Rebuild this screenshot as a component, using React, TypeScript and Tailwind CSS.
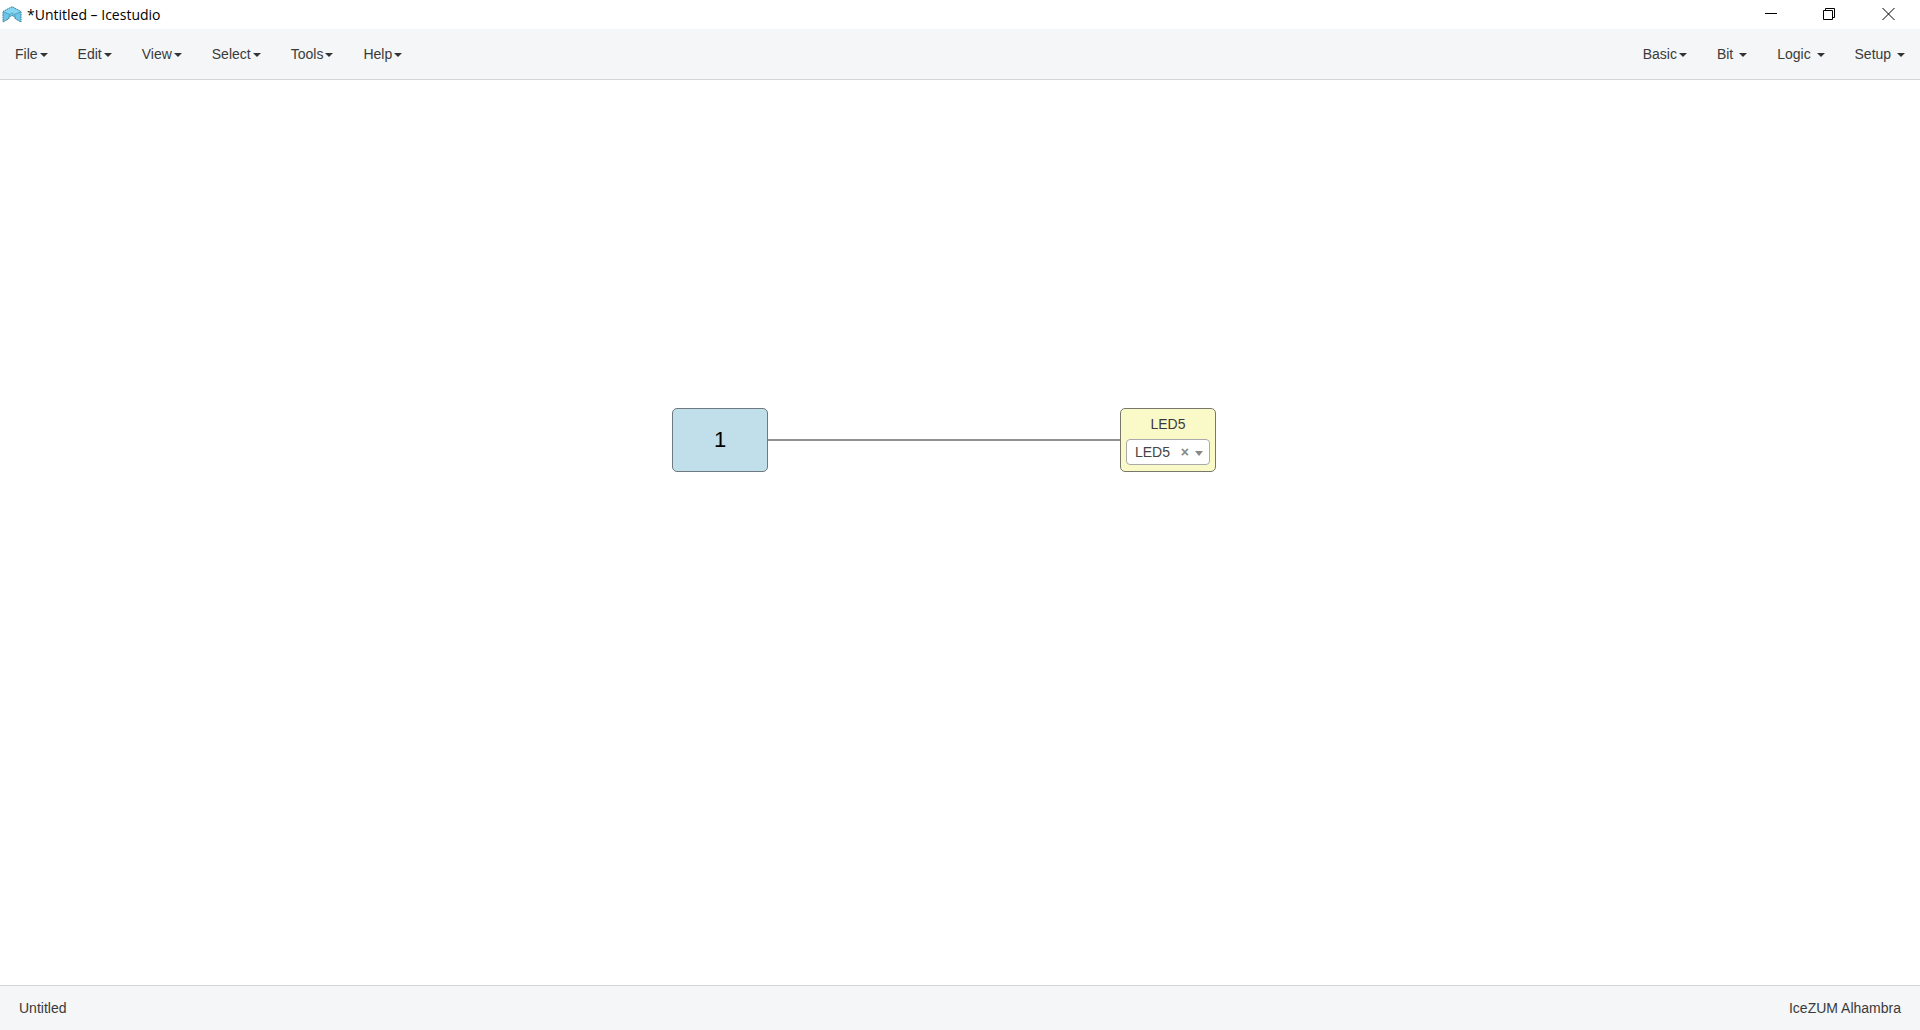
const fileMenus = [
  { label: "File", spaced: false },
  { label: "Edit", spaced: false },
  { label: "View", spaced: false },
  { label: "Select", spaced: false },
  { label: "Tools", spaced: false },
  { label: "Help", spaced: false },
];

const blockMenus = [
  { label: "Basic", spaced: false },
  { label: "Bit", spaced: true },
  { label: "Logic", spaced: true },
  { label: "Setup", spaced: true },
];

function Logo() {
  return (
    <svg className="h-[17px] w-5" viewBox="0 0 20 17" aria-hidden="true">
      <path d="M1 5.500 10 .7l9 4.800V16l-5.500-3-1.500-2.500-2-1-2 1L6.500 13 1 16z" fill="#6cc6ea" />
      <path d="M1.500 5.500 10 1l8.500 4.500L10 8.500z" fill="#86d6f3" />
      <path
        d="M1 5.500 10 .7l9 4.800V16l-5.500-3-1.500-2.500-2-1-2 1L6.500 13 1 16z"
        fill="none"
        stroke="#35748c"
        strokeWidth="1"
        strokeDasharray="1.500 .8"
      />
      <path
        d="M1.500 6 7.500 8.500 10 7l2.500 1.500 6-2.500M7.500 8.500 6 13M12.500 8.500 14 13"
        fill="none"
        stroke="#4b9dbd"
        strokeWidth=".8"
      />
    </svg>
  );
}

function WindowButton({ label, path }: { label: string; path: string }) {
  return (
    <button type="button" aria-label={label} className="flex w-12 items-center justify-center">
      <svg className="h-3 w-[13px]" viewBox="0 0 13 12" fill="none" stroke="#000">
        <path d={path} />
      </svg>
    </button>
  );
}

function Menu({ items }: { items: { label: string; spaced: boolean }[] }) {
  return (
    <ul className="flex">
      {items.map(({ label, spaced }) => (
        <li key={label}>
          <button type="button" aria-haspopup="menu" className="h-[50px] px-[15px] whitespace-pre">
            {spaced ? label + " " : label}
            <span className="ml-0.5 inline-block border-x-4 border-t-4 border-x-transparent border-t-[#333] align-middle" />
          </button>
        </li>
      ))}
    </ul>
  );
}

export default function App() {
  return (
    <div className="flex h-screen flex-col bg-white font-['Liberation_Sans',Arial,sans-serif] text-sm text-[#3a3a3a]">
      <header>
        <div className="flex h-[29px] justify-between">
          <div className="flex items-center gap-[5px] pl-0.5 font-['Open_Sans','Noto_Sans',sans-serif] text-sm text-black">
            <Logo />
            <h1>*Untitled – Icestudio</h1>
          </div>
          <div className="flex h-7 gap-[11px] pr-2">
            <WindowButton label="Minimize" path="M1 5.500h12" />
            <WindowButton label="Restore" path="M.5 2.500h9v9h-9zM2.500 2.500v-2h9v9h-2" />
            <WindowButton label="Close" path="M.5 0l12 12M12.500 0L.5 12" />
          </div>
        </div>
        <nav className="flex justify-between border-b border-[#d3d5d7] bg-[#f4f6f8]">
          <Menu items={fileMenus} />
          <Menu items={blockMenus} />
        </nav>
      </header>

      <main className="relative flex-1 overflow-hidden">
        <div className="absolute top-[359px] left-[768px] h-0.5 w-[352px] bg-[#919191]" />
        <div className="absolute top-[328px] left-[672px] flex h-16 w-24 items-center justify-center rounded-[5px] border border-[#6f7a80] bg-[#c0dfea] text-[22px] text-black">
          1
        </div>
        <div className="absolute top-[328px] left-[1120px] flex h-16 w-24 flex-col rounded-[5px] border border-[#77786a] bg-[#fafac8] px-[5px] pt-[5px]">
          <label htmlFor="led-pin" className="text-center leading-5">
            LED5
          </label>
          <div className="relative mt-[5px]">
            <select
              id="led-pin"
              className="block h-[26px] w-full appearance-none rounded border border-[#aaa] bg-white pl-2 text-[#444]"
            >
              <option>LED5</option>
            </select>
            <button
              type="button"
              aria-label="Clear selection"
              className="absolute top-[3px] right-[21px] leading-5 font-bold text-[#888]"
            >
              ×
            </button>
            <span className="pointer-events-none absolute top-3 right-[7px] border-x-4 border-t-[5px] border-x-transparent border-t-[#888]" />
          </div>
        </div>
      </main>

      <footer className="flex h-[45px] items-center justify-between border-t border-[#d3d5d7] bg-[#f4f6f8] px-[19px]">
        <span>Untitled</span>
        <span>IceZUM Alhambra</span>
      </footer>
    </div>
  );
}
